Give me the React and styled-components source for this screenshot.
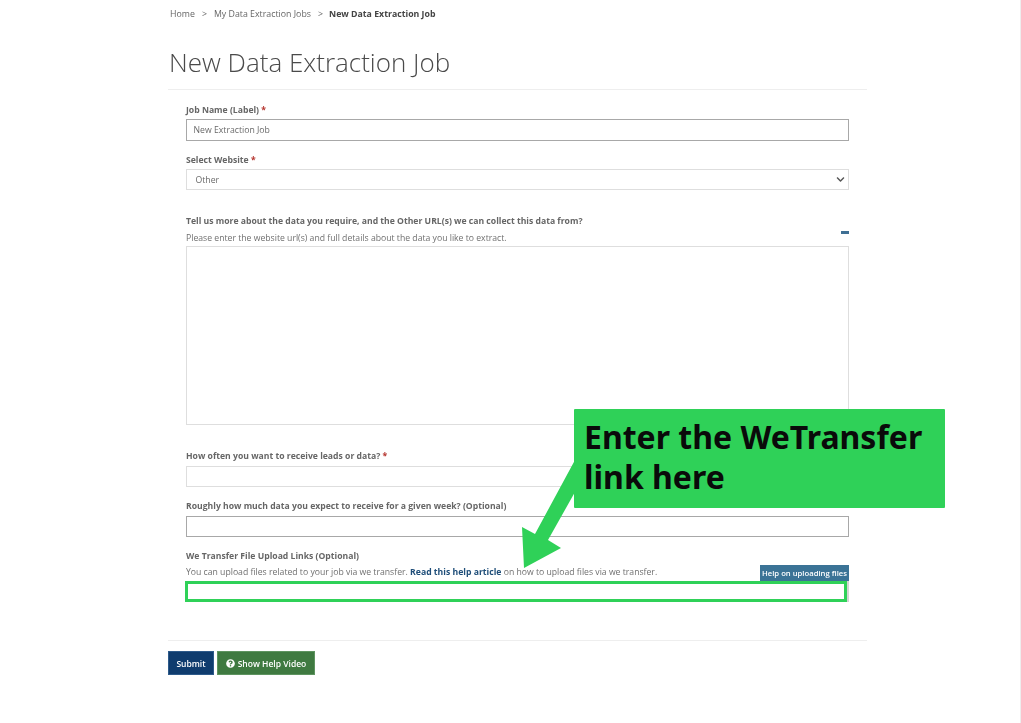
import React from "react";
import styled, { createGlobalStyle } from "styled-components";
import { FaChevronDown, FaQuestionCircle } from "react-icons/fa";

const Global = createGlobalStyle`
  html, body { margin: 0; padding: 0; background: #fff; }
  body { font-family: "Open Sans", "Liberation Sans", sans-serif; color: #555; }
  * { box-sizing: border-box; }
`;

const Page = styled.div`
  position: relative;
  width: 1021px;
  height: 723px;
  overflow: hidden;
  border-right: 1px solid #eeeeee;
`;

const Container = styled.main`
  width: 699px;
  margin-left: 168px;
  padding-top: 8px;
  filter: blur(0.3px);
`;

const Crumbs = styled.nav`
  display: flex;
  gap: 7px;
  height: 13px;
  padding-left: 2px;
  font-size: 8.8px;
  line-height: 13px;
  color: #666;
`;

const Crumb = styled.span`
  font-weight: ${(p) => (p.$current ? 700 : 400)};
  color: ${(p) => (p.$current ? "#444" : "#666")};
  font-size: ${(p) => (p.$current ? "8.75px" : "inherit")};
  margin-left: ${(p) => (p.$current ? -1 : 0)}px;
`;

const Title = styled.h1`
  margin: 22px 0 0;
  height: 47px;
  padding-left: 1px;
  border-bottom: 1px solid #eeeeee;
  font-size: 26px;
  line-height: 38px;
  font-weight: 300;
  color: #4a4a4a;
`;

const Form = styled.div`
  display: flex;
  flex-direction: column;
  padding: 14px 18px 0;
`;

const Label = styled.label`
  display: block;
  height: 12px;
  font-size: 8.65px;
  line-height: 12px;
  font-weight: 700;
  color: #666;
  margin-top: ${(p) => p.$top || 0}px;
`;

const Req = styled.span`
  color: #b5352f;
`;

const Input = styled.div`
  height: ${(p) => p.$h || 21}px;
  margin-top: ${(p) => p.$top ?? 4}px;
  padding-left: ${(p) => p.$pad ?? 6.5}px;
  display: flex;
  align-items: center;
  justify-content: space-between;
  background: #fff;
  border: ${(p) => (p.$dark ? "1.5px solid #a8a8a8" : "1.5px solid #dedede")};
  font-size: 8.7px;
  color: #6a6a6a;
`;

const Chevron = styled(FaChevronDown)`
  width: 9px;
  height: 9px;
  margin-right: 3px;
  color: #555;
`;

const HintRow = styled.div`
  display: flex;
  justify-content: space-between;
  align-items: flex-start;
  height: 19px;
`;

const Hint = styled.span`
  margin-top: ${(p) => p.$top}px;
  font-size: 8.67px;
  line-height: 12px;
  color: #707070;
`;

const HelpLink = styled.a`
  font-weight: 700;
  color: #1f4e79;
`;

const TinyButton = styled.span`
  width: 8px;
  height: 3px;
  margin-top: 4px;
  background: #3f6f94;
`;

const HelpButton = styled.span`
  width: 89px;
  height: 16px;
  margin-top: 3px;
  background: #3b7396;
  color: #fff;
  font-size: 7.7px;
  font-weight: 600;
  line-height: 16px;
  text-align: center;
  white-space: nowrap;
`;

const GreenInput = styled.div`
  height: 21px;
  margin: 0 2px 0 -1px;
  background: #fff;
  border: 3px solid #2fd158;
  box-shadow: 2px 0 0 #d4d4d4;
`;

const Footer = styled.div`
  display: flex;
  gap: 3px;
  margin-top: 38px;
  padding-top: 10px;
  border-top: 1px solid #eeeeee;
`;

const Button = styled.button`
  display: flex;
  align-items: center;
  justify-content: center;
  gap: 3px;
  height: 24px;
  width: ${(p) => p.$w}px;
  padding: 0;
  border: 1px solid ${(p) => p.$border};
  background: ${(p) => p.$bg};
  color: #fff;
  font-family: inherit;
  font-size: 8.5px;
  font-weight: 600;
`;

const Callout = styled.div`
  position: absolute;
  left: 574px;
  top: 409px;
  width: 371px;
  height: 99px;
  padding: 8px 10px;
  background: #2fd158;
  border-radius: 1px;
  color: #0a0a0a;
  font-family: "Noto Sans", "Open Sans", sans-serif;
  font-size: 32px;
  line-height: 40px;
  font-weight: 700;
`;

const Arrow = styled.svg`
  position: absolute;
  left: 515px;
  top: 455px;
  width: 70px;
  height: 120px;
`;

export default function App() {
  return (
    <Page>
      <Global />
      <Container>
        <Crumbs>
          <Crumb>Home</Crumb>
          <Crumb>&gt;</Crumb>
          <Crumb>My Data Extraction Jobs</Crumb>
          <Crumb>&gt;</Crumb>
          <Crumb $current>New Data Extraction Job</Crumb>
        </Crumbs>
        <Title>New Data Extraction Job</Title>
        <Form>
          <Label>Job Name (Label) <Req>*</Req></Label>
          <Input $dark $h={22} $top={3}>New Extraction Job</Input>
          <Label $top={13}>Select Website <Req>*</Req></Label>
          <Input $top={3} $pad={8.5}>
            Other
            <Chevron />
          </Input>
          <Label $top={25}>Tell us more about the data you require, and the Other URL(s) we can collect this data from?</Label>
          <HintRow>
            <Hint $top={5}>Please enter the website url(s) and full details about the data you like to extract.</Hint>
            <TinyButton />
          </HintRow>
          <Input $h={179} $top={0} />
          <Label $top={25}>How often you want to receive leads or data? <Req>*</Req></Label>
          <Input />
          <Label $top={13}>Roughly how much data you expect to receive for a given week? (Optional)</Label>
          <Input $dark />
          <Label $top={13}>We Transfer File Upload Links (Optional)</Label>
          <HintRow>
            <Hint $top={4}>
              You can upload files related to your job via we transfer. <HelpLink>Read this help article</HelpLink> on how to upload files via we transfer.
            </Hint>
            <HelpButton>Help on uploading files</HelpButton>
          </HintRow>
          <GreenInput />
        </Form>
        <Footer>
          <Button $w={46} $bg="#0f3c6e" $border="#2d5a8a">Submit</Button>
          <Button $w={98} $bg="#3f7a41" $border="#5e9460">
            <FaQuestionCircle size={9} />
            Show Help Video
          </Button>
        </Footer>
      </Container>
      <Arrow viewBox="515 455 70 120">
        <path d="M575 460 L535 534 L522 527 L524 568 L561 548 L548 540 L575 492 Z" fill="#2fd158" />
      </Arrow>
      <Callout>
        Enter the WeTransfer
        <br />
        link here
      </Callout>
    </Page>
  );
}
